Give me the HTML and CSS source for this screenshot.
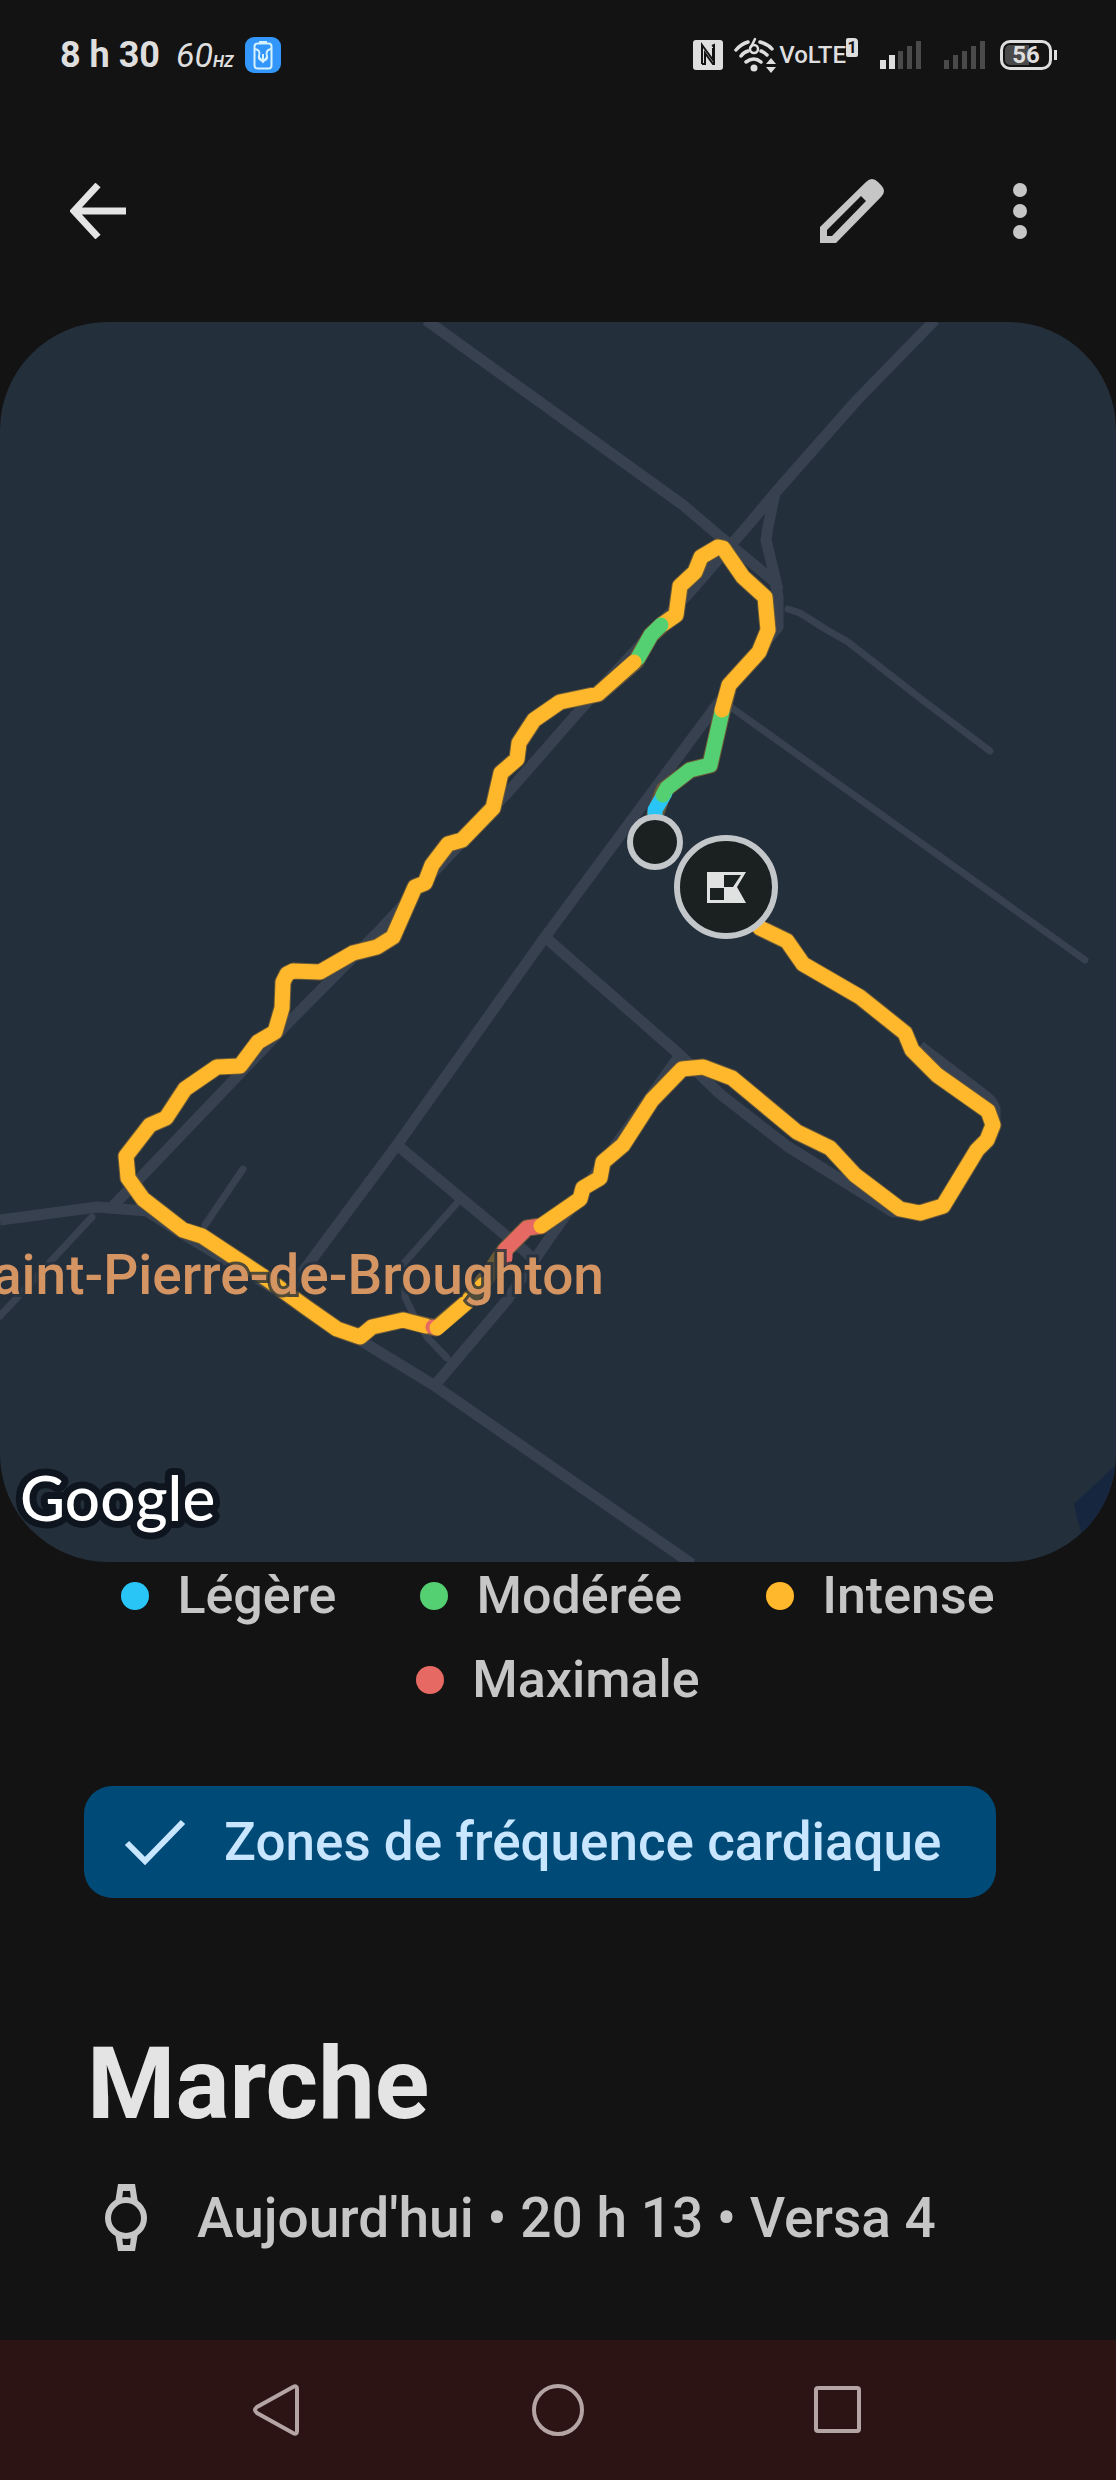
FILE: index.html
```html
<!DOCTYPE html>
<html lang="fr">
<head>
<meta charset="utf-8">
<meta name="viewport" content="width=device-width, initial-scale=1">
<title>Marche</title>
<link rel="stylesheet" href="styles.css">
</head>
<body>
<div class="status">
  <div class="status-group">
    <span class="clock">8 h 30</span>
    <span class="rate">60<span class="rate-unit">HZ</span></span>
    <svg class="power" width="36" height="36" viewBox="0 0 36 36" aria-hidden="true">
      <rect width="36" height="36" rx="9" fill="#3296fa"/>
      <path d="M14 4h8v3h-8z" fill="#d6f1ff"/>
      <rect x="9.500" y="6.500" width="17" height="25" rx="3" fill="none" stroke="#d6f1ff" stroke-width="2"/>
      <path d="M10 12q6 1 4 7-1 4 4 5 5-1 4-5-2-6 4-7M18 17v8M14 20l4 5 4-5" fill="none" stroke="#d6f1ff" stroke-width="2"/>
    </svg>
  </div>
  <div class="status-group status-right">
    <svg width="30" height="30" viewBox="0 0 30 30" aria-label="NFC">
      <rect width="30" height="30" rx="3" fill="#dedede"/>
      <path d="M9 24V5l11 15V8M9 24h3V13l8 11h1V5l-2 1" fill="none" stroke="#131313" stroke-width="2"/>
    </svg>
    <svg class="wifi" width="44" height="36" viewBox="0 0 44 36" aria-label="Wi-Fi 6">
      <g fill="none" stroke="#dedede" stroke-width="3.500" stroke-linecap="round">
        <path d="M3 13q5-6 12-8M27 5q8 2 12 7M8 19q3-4 7-5M28 14q3 1 6 4M13 25q8-6 15 0"/>
        <circle cx="21" cy="12" r="4" stroke-width="2.500"/>
        <path d="M18 10l4-8" stroke-width="2.500"/>
      </g>
      <circle cx="21" cy="31" r="3.500" fill="#dedede"/>
      <path d="M38 21l5 6H33zM38 36l-5-6h10z" fill="#dedede"/>
    </svg>
    <span class="volte">VoLTE</span><span class="sim">1</span>
    <svg class="bars" width="42" height="28" viewBox="0 0 42 28" aria-label="Signal SIM 1">
      <path d="M0 19h6v9H0zM9 14h6v14H9z" fill="#dedede"/>
      <path d="M18 10h5v18h-5zM27 5h5v23h-5zM36 0h5v28h-5z" fill="#4a4a4a"/>
    </svg>
    <svg class="bars" width="42" height="28" viewBox="0 0 42 28" aria-label="Signal SIM 2">
      <path d="M0 19h5v9H0zM9 14h5v14H9zM18 10h5v18h-5zM27 5h5v23h-5zM36 0h5v28h-5z" fill="#4a4a4a"/>
    </svg>
    <span class="battery">56</span>
  </div>
</div>

<header class="toolbar">
  <button class="icon-button" type="button" aria-label="Retour">
    <svg width="56" height="56" viewBox="0 0 56 56"><path d="M56 28H5M28 2L4 28l24 26" fill="none" stroke="#e4e4e4" stroke-width="7"/></svg>
  </button>
  <div class="toolbar-actions">
    <button class="icon-button" type="button" aria-label="Modifier">
      <svg width="64" height="64" viewBox="0 0 64 64">
        <path fill="#c6c6c6" fill-rule="evenodd" d="M0 64V48L46 3q6-6 12 0l3 3q6 6 0 12L16 64zM7 57h5L46 22l-5-5L7 51z"/>
      </svg>
    </button>
    <button class="icon-button" type="button" aria-label="Plus d'options">
      <svg width="56" height="56" viewBox="0 0 56 56" fill="#c6c6c6"><circle cx="28" cy="7" r="7"/><circle cx="28" cy="28" r="7"/><circle cx="28" cy="49" r="7"/></svg>
    </button>
  </div>
</header>

<main>
  <svg class="map" viewBox="0 322 1116 1240" role="img" aria-label="Carte du parcours">
    <path class="water" d="M1116 1465L1074 1504L1077 1518L1090 1562H1116z"/>
    <g class="minor">
      <path d="M788 609L800 613L827 630L848 642L925 702L990 751"/>
      <path d="M732 708L1085 960"/>
      <path d="M457 1203L405 1262V1297L415 1318L427 1337L447 1358"/>
      <path d="M243 1169L205 1225"/>
      <path d="M92 1217L0 1316"/>
    </g>
    <g class="road">
      <path d="M426 320L683 505L730 545L775 582L778 597V627L755 655L713 710L545 937L397 1145L310 1262L285 1296"/>
      <path d="M935 320L857 400L775 493L750 523L690 592L580 710L510 790L380 930L290 1021L140 1178L113 1206"/>
      <path d="M775 493L768 527L766 540L772 565L778 590"/>
      <path d="M545 937L680 1055L720 1094L787 1146L893 1212H930M995 1120V1108Q992 1100 983 1094L920 1046"/>
      <path d="M680 1055L553 1233L507 1300L435 1385"/>
      <path d="M397 1145L527 1253L537 1264"/>
      <path d="M0 1220L97 1207L147 1211L183 1234L360 1340L435 1386L692 1564"/>
    </g>
    <g class="track track-edge">
      <path d="M655 815L664 790L690 770L710 765L722 712L729 685L759 652L768 630L765 597L743 577L723 548L718 547L701 557L695 572L680 586L676 615L663 624L651 635L636 661L598 694L560 702L534 720L519 743L517 759L501 773L493 808L462 840L448 844L432 865L425 883L415 887L393 937L377 947L353 953L320 972L293 971L287 974L283 982L282 1008L275 1032L258 1042L240 1066L217 1067L185 1089L166 1118L150 1125L126 1156L128 1178L143 1199L183 1230L202 1236L267 1279L307 1308L337 1329L360 1337L372 1327L403 1320L436 1328L467 1302L490 1273L505 1250L527 1228L541 1226L580 1199L583 1188L600 1178L603 1162L623 1145L652 1100L682 1069L703 1067L732 1078L797 1132L830 1148L855 1175L900 1209L920 1213L943 1206L977 1150L987 1140L993 1125L988 1111L937 1075L912 1050L905 1033L860 997L803 964L787 941L760 928L740 900"/>
    </g>
    <g class="track">
      <path class="light" d="M655 815V810L665 793"/>
      <path class="moderate" d="M663 795L667 788L690 770L710 765L722 712"/>
      <path class="maximal" d="M505 1258V1250L527 1228L541 1226"/>
      <path class="intense" d="M722 710L729 685L759 652L768 630L765 597L743 577L723 548L718 547L701 557L695 572L680 586L676 615L663 624"/>
      <path class="moderate" d="M661 625L651 635L638 658"/>
      <path class="intense" d="M634 662L598 694L560 702L534 720L519 743L517 759L501 773L493 808L462 840L448 844L432 865L425 883L415 887L393 937L377 947L353 953L320 972L293 971L287 974L283 982L282 1008L275 1032L258 1042L240 1066L217 1067L185 1089L166 1118L150 1125L126 1156L128 1178L143 1199L183 1230L202 1236L267 1279L307 1308L337 1329L360 1337L372 1327L403 1320L426 1326"/>
      <path class="maximal" d="M433 1327L436 1328"/>
      <path class="intense" d="M437 1328L467 1302L484 1284"/>
      <path class="intense" d="M541 1226L580 1199L583 1188L600 1178L603 1162L623 1145L652 1100L682 1069L703 1067L732 1078L797 1132L830 1148L855 1175L900 1209L920 1213L943 1206L977 1150L987 1140L993 1125L988 1111L937 1075L912 1050L905 1033L860 997L803 964L787 941L760 928L740 900"/>
    </g>
    <g class="marker">
      <circle cx="655" cy="842" r="25"/>
      <circle cx="726" cy="887" r="49"/>
    </g>
    <path fill="#dfe2e0" fill-rule="evenodd" d="M707 872H746L737 887L746 903H707zM724 875V887H733L741 875zM710 888V900H724V888z"/>
    <text class="town" x="604" y="1294" text-anchor="end">Saint-Pierre-de-Broughton</text>
    <text class="provider" x="20" y="1521">Google</text>
  </svg>

  <ul class="legend">
    <li><span class="dot dot-light"></span>Légère</li>
    <li><span class="dot dot-moderate"></span>Modérée</li>
    <li><span class="dot dot-intense"></span>Intense</li>
    <li><span class="dot dot-maximal"></span>Maximale</li>
  </ul>

  <section class="details">
    <button class="chip" type="button" aria-pressed="true">
      <svg width="62" height="48" viewBox="0 0 62 48" aria-hidden="true"><path d="M3 25l18 18L59 4" fill="none" stroke="#c8e6ff" stroke-width="6"/></svg>
      Zones de fréquence cardiaque
    </button>
    <h1>Marche</h1>
    <p class="meta">
      <svg width="44" height="68" viewBox="0 0 44 68" aria-hidden="true">
        <circle cx="22" cy="34" r="18" fill="none" stroke="#c6c6c6" stroke-width="6"/>
        <path d="M11 19L14 0h17l3 19-7-3-1-9h-7l-1 9zM11 49l3 18h17l3-18-7 3-1 9h-7l-1-9z" fill="#c6c6c6"/>
      </svg>
      Aujourd'hui • 20 h 13 • Versa 4
    </p>
  </section>
</main>

<nav class="system-nav" aria-label="Navigation système">
  <button type="button" aria-label="Précédent"><svg width="54" height="54" viewBox="0 0 54 54"><path d="M6 24Q2 27 6 30L42 50Q46 52 46 48V6Q46 2 42 4z"/></svg></button>
  <button type="button" aria-label="Accueil"><svg width="54" height="54" viewBox="0 0 54 54"><circle cx="27" cy="27" r="24"/></svg></button>
  <button type="button" aria-label="Récents"><svg width="54" height="54" viewBox="0 0 54 54"><rect x="5" y="5" width="43" height="43" rx="2"/></svg></button>
</nav>
</body>
</html>
```
FILE: styles.css
```css
* { box-sizing: border-box; }

body {
  margin: 0;
  min-height: 100vh;
  display: flex;
  flex-direction: column;
  background: #131313;
  color: #c6c6c6;
  font-family: Roboto, "Liberation Sans", sans-serif;
}

button {
  border: 0;
  padding: 0;
  background: none;
  color: inherit;
  font: inherit;
}

svg { display: block; flex: none; }

/* Status bar */
.status {
  display: flex;
  justify-content: space-between;
  height: 100px;
  padding: 10px 64px 0 60px;
  color: #dedede;
}
.status-group { display: flex; align-items: center; }
.clock { font-size: 36px; font-weight: 700; }
.rate { margin-left: 16px; font-size: 34px; font-style: italic; }
.rate-unit { font-size: 16px; font-weight: 700; }
.power { margin-left: 12px; }
.wifi { margin-left: 10px; }
.volte { margin-left: 2px; font-size: 24px; font-weight: 500; }
.sim {
  width: 12px;
  height: 19px;
  margin-bottom: 16px;
  border-radius: 2px 4px 2px 2px;
  background: #dedede;
  color: #131313;
  font-size: 16px;
  font-weight: 700;
  line-height: 19px;
  text-align: center;
}
.bars { margin-left: 22px; }
.battery {
  position: relative;
  width: 52px;
  height: 30px;
  margin-left: 14px;
  border: 3px solid #dedede;
  border-radius: 10px;
  background: linear-gradient(90deg, #4a4a4a 56%, transparent 56%) content-box;
  padding: 2px;
  font-size: 24px;
  font-weight: 700;
  line-height: 20px;
  text-align: center;
}
.battery::after {
  content: "";
  position: absolute;
  right: -8px;
  top: 7px;
  width: 3px;
  height: 10px;
  background: #dedede;
}

/* Toolbar */
.toolbar {
  display: flex;
  align-items: center;
  justify-content: space-between;
  height: 222px;
  padding: 0 46px 0 48px;
}
.toolbar-actions { display: flex; gap: 68px; }
.icon-button {
  display: grid;
  place-items: center;
  width: 100px;
  height: 100px;
}

/* Map */
.map {
  width: 100%;
  height: auto;
  border-radius: 108px;
  background: #242f3c;
}
.water { fill: #17263f; }
.road, .minor, .track {
  fill: none;
  stroke-linejoin: round;
  stroke-width: 11px;
}
.road { stroke: #38414f; }
.minor { stroke: #38414f; stroke-width: 7px; stroke-linecap: round; }
.track { stroke-width: 15px; stroke-linecap: round; }
.track-edge { stroke: #6b5a38; stroke-width: 17px; }
.light { stroke: #29c5f6; }
.moderate { stroke: #54d072; }
.intense { stroke: #ffb82b; }
.maximal { stroke: #e66a63; }
.marker { fill: #1b2020; stroke: #c4c7ca; stroke-width: 6px; }
.town {
  fill: #d59563;
  stroke: #242f3ccc;
  stroke-width: 6px;
  paint-order: stroke;
  font-size: 55px;
  font-weight: 500;
}
.provider {
  fill: #fff;
  stroke: #0e151f;
  stroke-width: 14px;
  stroke-linejoin: round;
  paint-order: stroke;
  font-family: Lato, sans-serif;
  font-size: 62px;
  font-weight: 500;
}

/* Heart-rate zones legend */
.legend {
  display: flex;
  flex-wrap: wrap;
  justify-content: center;
  gap: 24px 84px;
  margin: 0;
  padding: 4px 84px 0;
  list-style: none;
  font-size: 52px;
  font-weight: 500;
  line-height: 60px;
}
.legend li { display: flex; align-items: center; gap: 28px; }
.dot { width: 28px; height: 28px; border-radius: 50%; }
.dot-light { background: #29c5f6; }
.dot-moderate { background: #54d072; }
.dot-intense { background: #ffb82b; }
.dot-maximal { background: #e66a63; }

/* Activity details */
.details { padding: 76px 84px 84px; }
.chip {
  display: flex;
  align-items: center;
  gap: 38px;
  height: 112px;
  padding: 0 55px 0 40px;
  border-radius: 28px;
  background: #004a77;
  color: #c8e6ff;
  font-size: 53px;
  font-weight: 500;
}
h1 {
  margin: 126px 0 38px;
  padding-left: 3px;
  color: #e4e4e4;
  font-size: 101px;
  font-weight: 700;
  line-height: 120px;
}
.meta {
  display: flex;
  align-items: center;
  gap: 49px;
  margin: 0;
  padding-left: 20px;
  font-size: 55px;
  font-weight: 500;
  line-height: 72px;
}

/* System navigation */
.system-nav {
  display: flex;
  justify-content: center;
  gap: 180px;
  height: 140px;
  margin-top: auto;
  background: #2c1314;
}
.system-nav button { display: grid; place-items: center; width: 100px; }
.system-nav svg { fill: none; stroke: #b5a4a4; stroke-width: 4px; }
```
